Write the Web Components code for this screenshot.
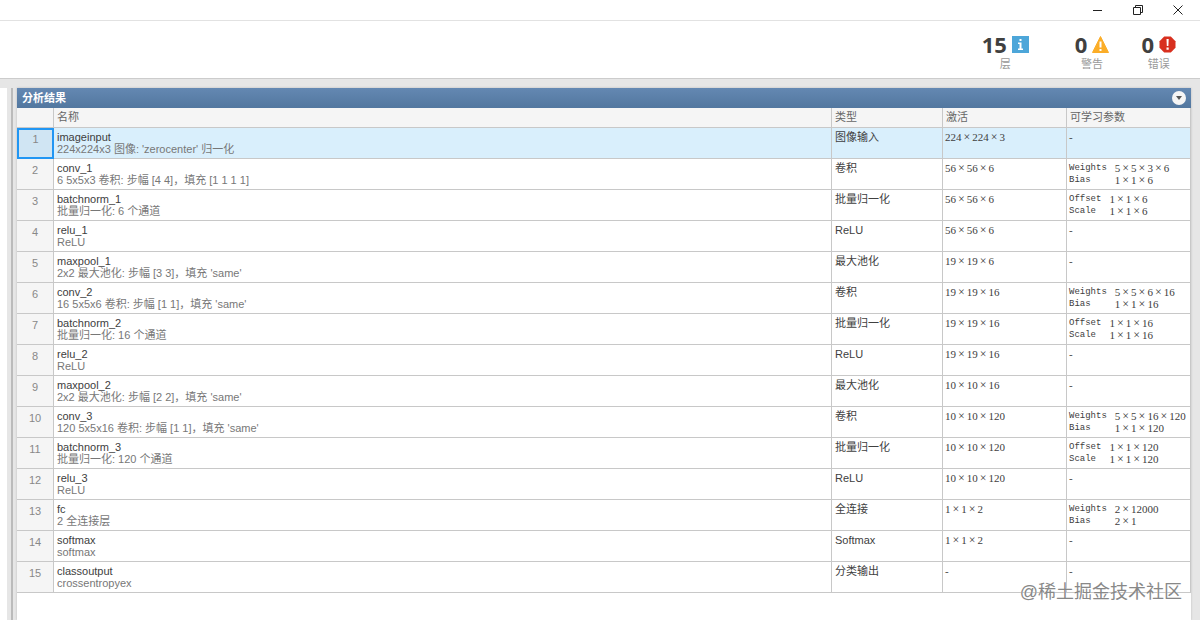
<!DOCTYPE html>
<html lang="zh-CN">
<head>
<meta charset="utf-8">
<title>分析结果</title>
<style>
  html, body {
    height: 100%;
  }

  body {
    margin: 0;
    overflow: hidden;
    font-family: "Liberation Sans", "Noto Sans CJK SC", sans-serif;
    color: #404040;
    background: #fff;
  }
</style>
</head>
<body>
<vn-analyzer></vn-analyzer>

<script>
/* ------------- DATA ------------- */
const layers = [
  { name: "imageinput", info: "224x224x3 图像: 'zerocenter' 归一化", type: "图像输入", size: "224×224×3" },
  { name: "conv_1", info: "6 5x5x3 卷积: 步幅 [4 4]，填充 [1 1 1 1]", type: "卷积", size: "56×56×6", params: [["Weights", "5×5×3×6"], ["Bias", "1×1×6"]] },
  { name: "batchnorm_1", info: "批量归一化: 6 个通道", type: "批量归一化", size: "56×56×6", params: [["Offset", "1×1×6"], ["Scale", "1×1×6"]] },
  { name: "relu_1", info: "ReLU", type: "ReLU", size: "56×56×6" },
  { name: "maxpool_1", info: "2x2 最大池化: 步幅 [3 3]，填充 'same'", type: "最大池化", size: "19×19×6" },
  { name: "conv_2", info: "16 5x5x6 卷积: 步幅 [1 1]，填充 'same'", type: "卷积", size: "19×19×16", params: [["Weights", "5×5×6×16"], ["Bias", "1×1×16"]] },
  { name: "batchnorm_2", info: "批量归一化: 16 个通道", type: "批量归一化", size: "19×19×16", params: [["Offset", "1×1×16"], ["Scale", "1×1×16"]] },
  { name: "relu_2", info: "ReLU", type: "ReLU", size: "19×19×16" },
  { name: "maxpool_2", info: "2x2 最大池化: 步幅 [2 2]，填充 'same'", type: "最大池化", size: "10×10×16" },
  { name: "conv_3", info: "120 5x5x16 卷积: 步幅 [1 1]，填充 'same'", type: "卷积", size: "10×10×120", params: [["Weights", "5×5×16×120"], ["Bias", "1×1×120"]] },
  { name: "batchnorm_3", info: "批量归一化: 120 个通道", type: "批量归一化", size: "10×10×120", params: [["Offset", "1×1×120"], ["Scale", "1×1×120"]] },
  { name: "relu_3", info: "ReLU", type: "ReLU", size: "10×10×120" },
  { name: "fc", info: "2 全连接层", type: "全连接", size: "1×1×2", params: [["Weights", "2×12000"], ["Bias", "2×1"]] },
  { name: "softmax", info: "softmax", type: "Softmax", size: "1×1×2" },
  { name: "classoutput", info: "crossentropyex", type: "分类输出", size: "-" }
];

const createTemplate = (html) => {
  const template = document.createElement("template");
  template.innerHTML = html;
  return template;
}

/* ---------- WINDOW BAR ---------- */
const template_windowbar = createTemplate(/*html*/`
  <style>
    :host {
      display: flex;
      justify-content: flex-end;
      height: 20px;
      padding-right: 2px;
      background: #fff;
      border-bottom: 1px solid #e2e2e2;
    }

    button {
      width: 40px;
      padding: 0;
      border: 0;
      background: none;
      display: grid;
      place-items: center;
    }

    svg {
      display: block;
      fill: none;
      stroke: #222;
    }
  </style>

  <button aria-label="最小化"><svg width="10" height="10"><path d="M0 5.5h9"/></svg></button>
  <button aria-label="还原"><svg width="10" height="10"><path d="M.5 2.5h7v7h-7zM2.5 2.5v-2h7v7h-2"/></svg></button>
  <button aria-label="关闭"><svg width="10" height="10"><path d="M.5.5l9 9M9.5.5l-9 9"/></svg></button>
`);

class WindowBar extends HTMLElement {
  constructor() {
    super();
    this.attachShadow({ mode: "open" }).append(template_windowbar.content.cloneNode(true));
  }
}

/* ----------- COUNTER ------------ */
const icons = {
  info: /*html*/`
    <rect width="17" height="17" fill="#4da6d9"/>
    <path d="M7.5 3h2v2h-2zM6 6.500h3.500v6h1.500v1.500h-5v-1.500h1.500v-4.500h-1.500z" fill="#fff"/>`,
  warning: /*html*/`
    <path d="M8.500 .5L16.500 16.500h-16z" fill="#fbad28" stroke="#fbad28" stroke-linejoin="round"/>
    <path d="M7.500 5.500h2v6h-2zM7.500 13h2v2h-2z" fill="#fff"/>`,
  error: /*html*/`
    <path d="M5.200.5h6.600l4.700 4.700v6.600l-4.700 4.700H5.200L.5 11.800V5.200z" fill="#d8301f"/>
    <path d="M7.500 3h2.200l-.3 7h-1.600zM7.500 11.500h2.200v2.200H7.500z" fill="#fff"/>`
};

const template_counter = createTemplate(/*html*/`
  <style>
    :host {
      display: block;
      text-align: center;
    }

    div {
      display: flex;
      align-items: center;
      gap: 5px;
      height: 24px;
      font: bold 22px/24px "Open Sans", "Noto Sans", sans-serif;
      color: #404040;
    }

    svg {
      width: 17px;
      height: 17px;
    }

    span {
      display: block;
      font-size: 11px;
      line-height: 16px;
      color: #999;
    }
  </style>

  <div><slot name="value"></slot><svg viewBox="0 0 17 17"></svg></div>
  <span><slot></slot></span>
`);

class StatusCounter extends HTMLElement {
  constructor() {
    super();
    this.attachShadow({ mode: "open" }).append(template_counter.content.cloneNode(true));
  }

  connectedCallback() {
    this.shadowRoot.querySelector("svg").innerHTML = icons[this.getAttribute("icon")];
  }
}

/* ------------ PANEL ------------- */
const template_panel = createTemplate(/*html*/`
  <style>
    :host {
      display: block;
      background: #fff;
      box-shadow: 0 0 2px #bbb;
    }

    header {
      display: flex;
      align-items: center;
      justify-content: space-between;
      box-sizing: border-box;
      height: 20px;
      padding: 0 5px;
      background: linear-gradient(#6488b2, #52779f);
    }

    h2 {
      margin: 0;
      font-size: 11px;
      line-height: 20px;
      color: #fff;
    }

    button {
      width: 14px;
      height: 14px;
      padding: 0;
      border: 0;
      border-radius: 50%;
      background: #f5f5f5;
      display: grid;
      place-items: center;
    }
  </style>

  <header>
    <h2><slot name="title"></slot></h2>
    <button aria-label="面板操作"><svg width="8" height="4"><path d="M1 0h6L4 4z" fill="#555"/></svg></button>
  </header>
  <slot></slot>
`);

class Panel extends HTMLElement {
  constructor() {
    super();
    this.attachShadow({ mode: "open" }).append(template_panel.content.cloneNode(true));
  }
}

/* --------- LAYER TABLE ---------- */
const template_table = createTemplate(/*html*/`
  <style>
    :host {
      display: block;
    }

    table {
      width: 100%;
      table-layout: fixed;
      border-collapse: separate;
      border-spacing: 0;
      font-size: 11px;
      line-height: 12px;
    }

    th, td {
      box-sizing: border-box;
      padding: 3px 0 3px 3px;
      border: solid #c8c8c8;
      border-width: 0 1px 1px 0;
      text-align: left;
      vertical-align: top;
      font-weight: normal;
      white-space: nowrap;
    }

    thead th {
      height: 20px;
      background: #f5f5f5;
      color: #666;
    }

    tbody th, tbody td {
      height: 31px;
    }

    tbody th {
      padding: 5px 0 0;
      text-align: center;
      color: #888;
      background: #f5f5f5;
    }

    .index { width: 37px; }
    .type { width: 111px; }
    .size, .params { width: 124px; }

    p, dl, dd {
      margin: 0;
    }

    .info {
      color: #777;
    }

    .selected td {
      background: #d9effc;
    }

    .selected th {
      padding-top: 3px;
      border: 2px solid #2196f3;
      background: #d0e5f3;
    }

    .dims {
      padding-left: 2px;
      font-family: "Liberation Serif", serif;
    }

    .dims span {
      padding: 0 2px;
      font-size: 12px;
    }

    dl {
      display: grid;
      grid-template-columns: max-content max-content;
      grid-auto-rows: 12px;
      column-gap: 8px;
    }

    dt {
      font-family: "Liberation Mono", monospace;
      font-size: 9px;
    }
  </style>

  <table>
    <thead>
      <tr>
        <th class="index"></th>
        <th>名称</th>
        <th class="type">类型</th>
        <th class="size">激活</th>
        <th class="params">可学习参数</th>
      </tr>
    </thead>
    <tbody></tbody>
  </table>
`);

const formatDims = (dims) => dims.replaceAll("×", "<span>×</span>");

const createParams = (params) => {
  if (!params) {
    return "-";
  }

  return `<dl>${params.map(([label, dims]) => `<dt>${label}</dt><dd>${formatDims(dims)}</dd>`).join("")}</dl>`;
}

const createRow = (layer, index) => /*html*/`
  <tr class="${index === 0 ? "selected" : ""}">
    <th>${index + 1}</th>
    <td><p>${layer.name}</p><p class="info">${layer.info}</p></td>
    <td>${layer.type}</td>
    <td class="dims">${formatDims(layer.size)}</td>
    <td class="dims">${createParams(layer.params)}</td>
  </tr>
`;

class LayerTable extends HTMLElement {
  constructor() {
    super();
    this.attachShadow({ mode: "open" }).append(template_table.content.cloneNode(true));
  }

  connectedCallback() {
    this.shadowRoot.querySelector("tbody").innerHTML = layers.map(createRow).join("");
  }
}

/* ----------- ANALYZER ----------- */
const template_analyzer = createTemplate(/*html*/`
  <style>
    :host {
      display: flex;
      flex-direction: column;
      height: 100%;
      position: relative;
    }

    .summary {
      display: flex;
      justify-content: flex-end;
      box-sizing: border-box;
      height: 58px;
      padding: 11px 24px 0 0;
      border-bottom: 1px solid #ccc;
    }

    vn-counter {
      margin-left: 32px;
    }

    vn-counter:first-child {
      margin-right: 14px;
    }

    main {
      flex: 1;
      display: grid;
      grid-template-columns: 7px 2px 1fr;
      min-height: 0;
      gap: 4px;
      padding: 9px 9px 0 0;
      background: #e6e6e6;
    }

    aside {
      background: #fff;
    }

    .splitter {
      background: #bbb;
    }

    .watermark {
      position: absolute;
      right: 18px;
      bottom: 16px;
      font-size: 18px;
      line-height: 24px;
      color: #888;
      text-shadow: 0 0 1px #fff;
    }
  </style>

  <vn-windowbar></vn-windowbar>
  <div class="summary">
    <vn-counter icon="info"><span slot="value">15</span>层</vn-counter>
    <vn-counter icon="warning"><span slot="value">0</span>警告</vn-counter>
    <vn-counter icon="error"><span slot="value">0</span>错误</vn-counter>
  </div>
  <main>
    <aside></aside>
    <div class="splitter"></div>
    <vn-panel>
      <span slot="title">分析结果</span>
      <vn-layertable></vn-layertable>
    </vn-panel>
  </main>
  <div class="watermark">@稀土掘金技术社区</div>
`);

class Analyzer extends HTMLElement {
  constructor() {
    super();
    this.attachShadow({ mode: "open" }).append(template_analyzer.content.cloneNode(true));
  }
}

customElements.define("vn-windowbar", WindowBar);
customElements.define("vn-counter", StatusCounter);
customElements.define("vn-panel", Panel);
customElements.define("vn-layertable", LayerTable);
customElements.define("vn-analyzer", Analyzer);
</script>
</body>
</html>
